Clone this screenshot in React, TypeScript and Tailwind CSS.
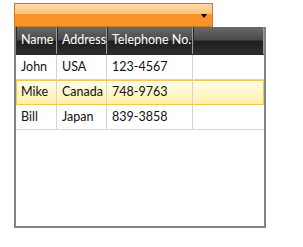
const ROWS = [
  { name: 'John', address: 'USA', phone: '123-4567' },
  { name: 'Mike', address: 'Canada', phone: '748-9763', selected: true },
  { name: 'Bill', address: 'Japan', phone: '839-3858' },
];

const COLS = ['w-[41px]', 'w-[50px]', 'w-[86px]', 'flex-1'];

export default function App() {
  return (
    <div className="w-[303px] h-[247px] bg-white pt-[3px] pl-[14px] text-[12.5px] text-[#111] font-['Lato',sans-serif] whitespace-nowrap">
      {/* combo box */}
      <div className="w-[199px] h-[24px] border border-[#c87a2a] flex flex-col relative">
        <div className="h-[10px] bg-gradient-to-b from-[#ffd9a6] to-[#fdc27e]" />
        <div className="flex-1 bg-gradient-to-b from-[#fb9426] to-[#f8922a]" />
        <div className="absolute right-[5px] top-[10px] w-0 h-0 border-l-[3px] border-r-[3px] border-t-[4px] border-l-transparent border-r-transparent border-t-black" />
      </div>

      {/* popup */}
      <div className="w-[252px] h-[201px] border-l-2 border-r-2 border-b-2 border-[#838383] bg-white">
        <div className="flex h-[28px] text-white border-b border-[#2a2a2a] bg-[#2e2e2e]">
          {['Name', 'Address', 'Telephone No.', ''].map((h, i) => (
            <div
              key={i}
              className={`${COLS[i]} flex items-center pl-[4px] border-r border-[#9a9a9a] border-l border-l-[#2a2a2a] bg-[linear-gradient(to_bottom,#6a6a6a_0%,#4a4a4a_48%,#1e1e1e_52%,#2e2e2e_100%)]`}
            >
              {h}
            </div>
          ))}
        </div>
        {ROWS.map((r) => (
          <div
            key={r.name}
            className={`flex h-[25px] border-b border-[#d4d4d4] ${
              r.selected
                ? 'outline outline-1 outline-[#f3c84c] -outline-offset-1 bg-gradient-to-b from-[#fffce9] to-[#fff1a8]'
                : ''
            }`}
          >
            {[r.name, r.address, r.phone, ''].map((c, i) => (
              <div
                key={i}
                className={`${COLS[i]} flex items-center pl-[5px] ${i < 3 ? 'border-r border-[#d4d4d4]' : ''}`}
              >
                {c}
              </div>
            ))}
          </div>
        ))}
      </div>
    </div>
  );
}
